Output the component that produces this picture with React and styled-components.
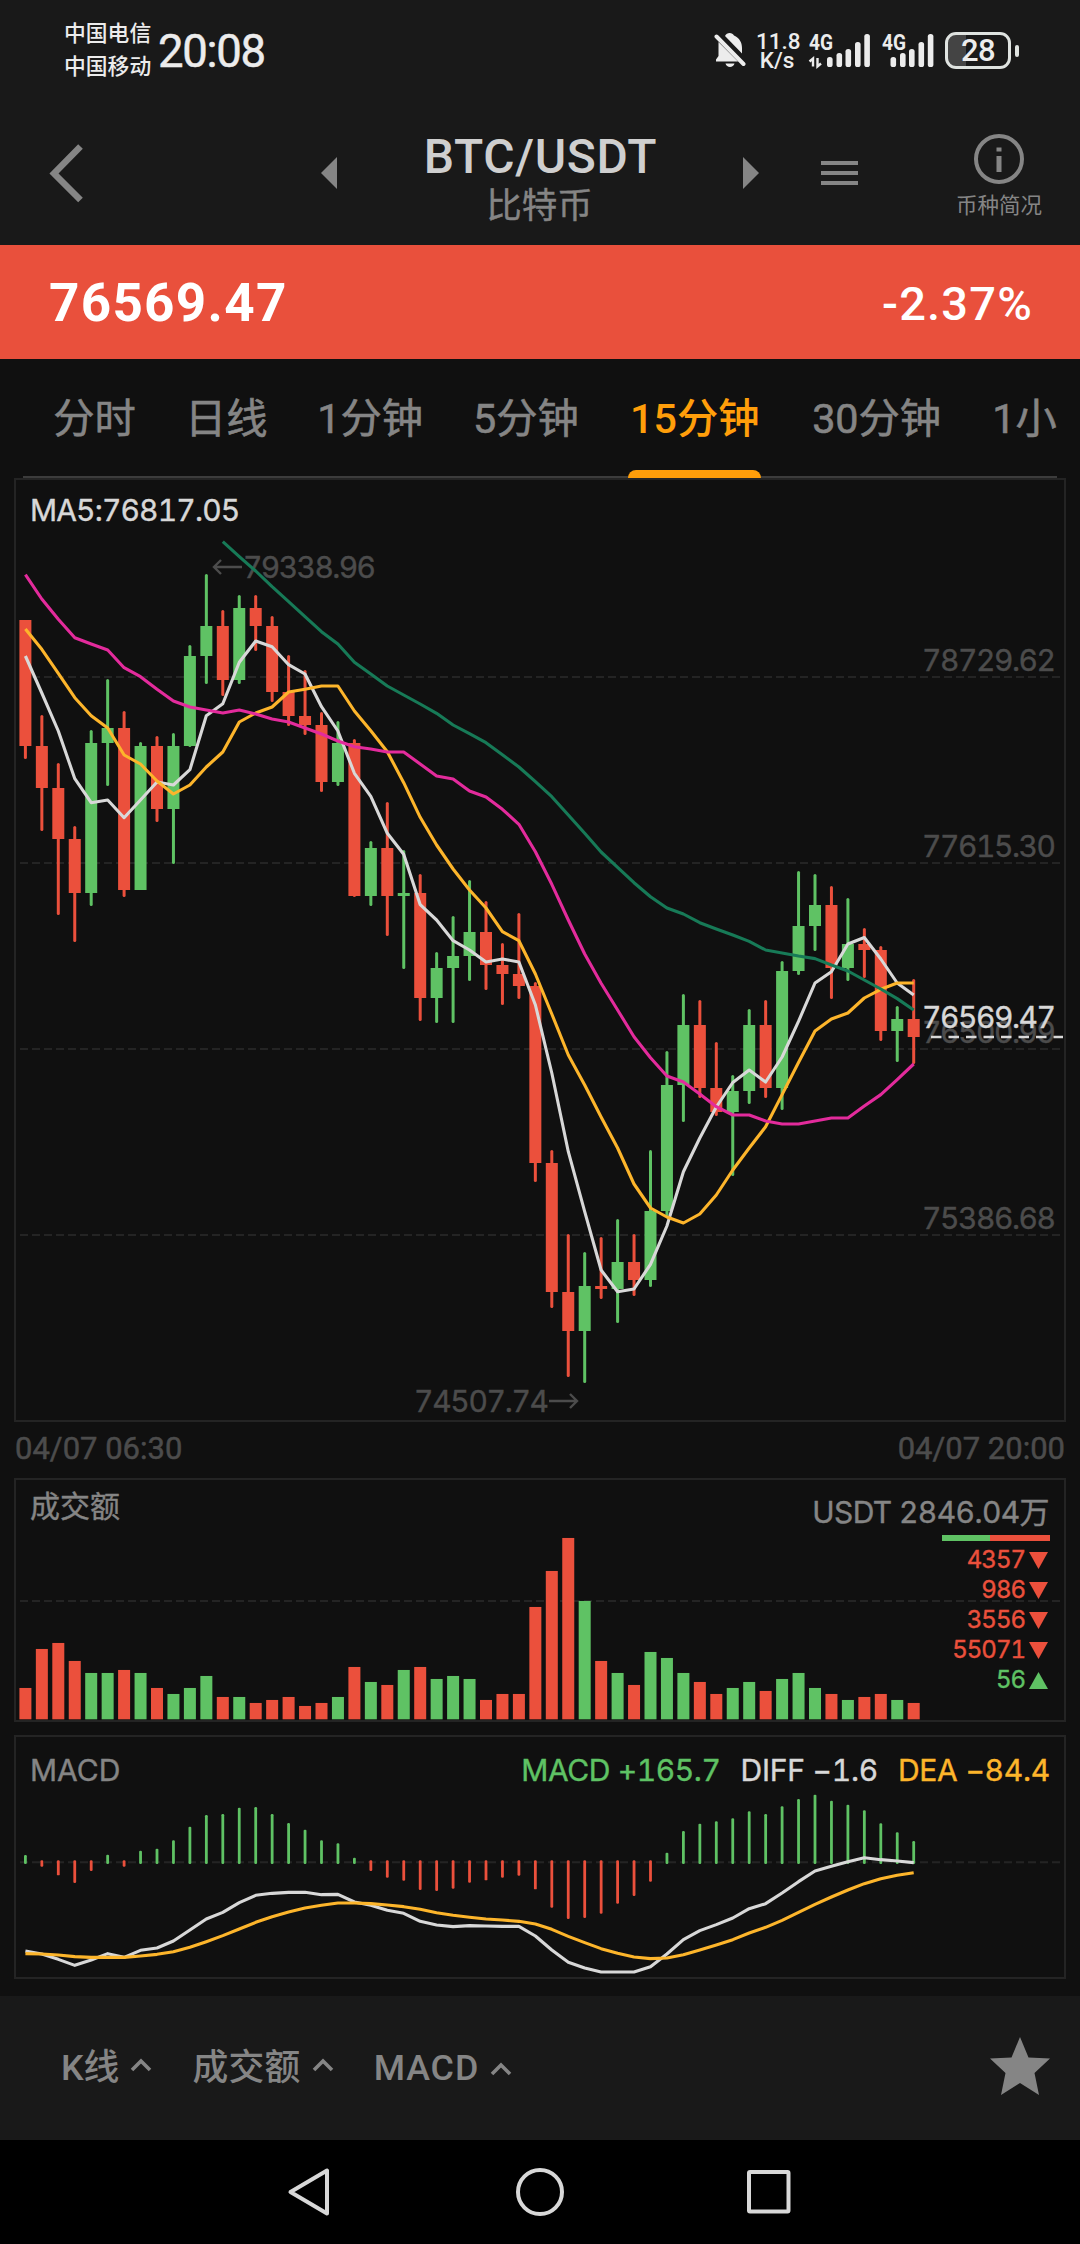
import React from "react";
import styled, { createGlobalStyle } from "styled-components";

const GREEN = "#5fc264";
const RED = "#eb503c";
const GREY = "#858585";
const DIM = "#4c4c4c";
const LIGHT = "#d8d8d8";
const AMBER = "#fdb52b";
const PINK = "#e32b9c";
const TEAL = "#177a57";
const LINE = "#242424";
const FONT = `Roboto, "Noto Sans CJK SC", sans-serif`;
const CHART_FONT = `Inter, "Noto Sans CJK SC", sans-serif`;

const Global = createGlobalStyle`
  * { box-sizing: border-box; }
  body { margin: 0; background: #101010; font-family: ${FONT}; }
`;

const Screen = styled.div`
  width: 1080px;
  height: 2244px;
  display: flex;
  flex-direction: column;
  background: #101010;
  overflow: hidden;
`;

/* ---------- status bar ---------- */
const StatusBar = styled.div`
  height: 100px;
  padding: 18px 61px 0 64px;
  display: flex;
  justify-content: space-between;
  background: #191919;
  color: #ececec;
`;
const StatusLeft = styled.div`
  display: flex;
  gap: 6px;
`;
const Carriers = styled.div`
  width: 88px;
  font-size: 21.8px;
  line-height: 32.5px;
  font-weight: 500;
  white-space: nowrap;
`;
const Clock = styled.div`
  font-size: 45.5px;
  line-height: 68px;
  letter-spacing: -1.3px;
  -webkit-text-stroke: 0.5px #ececec;
`;
const StatusRight = styled.div`
  display: flex;
  align-items: flex-start;
`;
const BellIcon = styled.svg`
  width: 32px;
  height: 36px;
  margin: 14px 10px 0 0;
`;
const NetSpeed = styled.div`
  width: 42px;
  margin: 14px 10px 0 0;
  font-size: 22.5px;
  line-height: 19px;
  text-align: center;
  white-space: nowrap;
  font-weight: 500;
`;
const SignalIcon = styled.svg`
  width: 64px;
  height: 36px;
  margin: 14px ${(p) => p.$gap}px 0 0;
  overflow: visible;
`;
const NetType = styled.text`
  font-family: ${FONT};
  font-size: 22.5px;
  font-weight: 700;
  fill: #ececec;
`;
const Battery = styled.div`
  width: 66px;
  height: 37px;
  margin-top: 14px;
  border: 3px solid #dfe3e0;
  border-radius: 11px;
  font-size: 31px;
  line-height: 32px;
  text-align: center;
  letter-spacing: -0.5px;
  font-weight: 500;
  background: linear-gradient(90deg, #444 0 18px, transparent 18px);
`;
const BatteryTip = styled.div`
  width: 4px;
  height: 12px;
  margin: 27px 0 0 4px;
  border-radius: 2px;
  background: #dfe3e0;
`;

/* ---------- title bar ---------- */
const TitleBar = styled.header`
  height: 145px;
  padding: 0 38px 0 49px;
  display: flex;
  align-items: flex-start;
  background: #191919;
`;
const BarIcon = styled.svg`
  width: ${(p) => p.$w}px;
  height: ${(p) => p.$h}px;
  margin: ${(p) => p.$top}px ${(p) => p.$right || 0}px 0 0;
  flex: none;
`;
const Title = styled.div`
  width: 405px;
  padding-top: 29px;
  text-align: center;
  white-space: nowrap;
`;
const Pair = styled.div`
  font-size: 48px;
  line-height: 55px;
  font-weight: 500;
  letter-spacing: 0.65px;
  color: #cfcfcf;
`;
const PairName = styled.div`
  margin-top: 1px;
  padding-right: 2px;
  font-size: 35.5px;
  line-height: 42px;
  color: ${GREY};
  -webkit-text-stroke: 0.4px;
`;
const InfoButton = styled.div`
  flex: 1;
  display: flex;
  flex-direction: column;
  align-items: flex-end;
`;
const InfoLabel = styled.div`
  margin-top: 6px;
  width: 86px;
  font-size: 21.5px;
  line-height: 31px;
  color: ${GREY};
  white-space: nowrap;
`;

/* ---------- price ---------- */
const PriceBar = styled.div`
  height: 114px;
  padding: 2px 47px 0 49px;
  display: flex;
  align-items: center;
  justify-content: space-between;
  background: #e9503c;
  color: #fff;
`;
const Price = styled.div`
  font-size: 53px;
  font-weight: 700;
  letter-spacing: 1.3px;
  line-height: 116px;
`;
const Change = styled.div`
  font-size: 47px;
  font-weight: 500;
  letter-spacing: 1.2px;
  line-height: 119px;
`;

/* ---------- tabs ---------- */
const Tabs = styled.nav`
  height: 119px;
  margin: 0 23px;
  padding: 0 0 0 30px;
  display: flex;
  justify-content: space-between;
  border-bottom: 2px solid #3c3c3c;
`;
const Tab = styled.div`
  width: ${(p) => p.$w}px;
  height: 119px;
  padding-bottom: 8px;
  display: flex;
  align-items: center;
  justify-content: center;
  font-size: 41.3px;
  font-weight: ${(p) => (p.$active ? 500 : 400)};
  -webkit-text-stroke: ${(p) => (p.$active ? 0 : 0.6)}px;
  white-space: nowrap;
  color: ${(p) => (p.$active ? "#ff9e0a" : "#858585")};
  position: relative;
  &::after {
    content: "";
    display: ${(p) => (p.$active ? "block" : "none")};
    position: absolute;
    left: 0;
    right: 0;
    bottom: 0;
    height: 8px;
    border-radius: 8px 8px 0 0;
    background: #ff9e0a;
  }
`;

/* ---------- chart panels ---------- */
const Panel = styled.section`
  display: grid;
  height: ${(p) => p.$h}px;
  margin: ${(p) => p.$gap || 0}px 14px 0;
  flex: none;
  border: 2px solid ${LINE};
`;
const Layer = styled.svg`
  grid-area: 1 / 1;
  width: 1048px;
  height: ${(p) => p.$h}px;
  display: block;
`;
const PanelHead = styled.div`
  grid-area: 1 / 1;
  align-self: start;
  display: flex;
  align-items: flex-start;
  justify-content: space-between;
  padding: ${(p) => p.$top}px 14px 0 14px;
  font-family: ${CHART_FONT};
  font-variant-numeric: tabular-nums;
  font-size: 30px;
  line-height: 36px;
  letter-spacing: ${(p) => p.$spacing || 0}px;
  color: ${(p) => p.$color || GREY};
  -webkit-text-stroke: 0.4px;
  white-space: nowrap;
`;
const ChartText = styled.text`
  font-family: ${CHART_FONT};
  font-variant-numeric: tabular-nums;
  font-size: 30px;
  fill: ${(p) => p.$color || DIM};
  stroke: ${(p) => p.$color || DIM};
  stroke-width: 0.4px;
`;
const TimeAxis = styled.div`
  height: 56px;
  padding: 0 15px;
  display: flex;
  justify-content: space-between;
  font-size: 31px;
  line-height: 53px;
  color: ${DIM};
  -webkit-text-stroke: 0.5px;
`;
const TurnoverSide = styled.div`
  display: flex;
  flex-direction: column;
  align-items: flex-end;
`;
const Turnover = styled.div`
  padding: 6px 1px 0 0;
  letter-spacing: -0.6px;
`;
const Ratio = styled.div`
  width: 108px;
  height: 6px;
  margin: 5px 0 0;
  background: linear-gradient(90deg, ${GREEN} 0 48px, ${RED} 48px);
`;
const Flow = styled.div`
  height: 30px;
  display: flex;
  align-items: center;
  gap: 4px;
  padding: 8px 2px 0 0;
  font-size: 24px;
  letter-spacing: -1px;
  color: ${(p) => (p.$up ? GREEN : RED)};
`;
const Legend = styled.div`
  display: flex;
  gap: 20px;
`;
const LegendItem = styled.span`
  color: ${(p) => p.$color};
  letter-spacing: ${(p) => p.$spacing}px;
`;

/* ---------- bottom ---------- */
const Toolbar = styled.footer`
  height: 144px;
  margin-top: 17px;
  padding: 0 30px 0 61px;
  display: flex;
  align-items: center;
  background: #191919;
  color: ${GREY};
`;
const Picker = styled.div`
  display: flex;
  align-items: center;
  gap: ${(p) => p.$gap}px;
  margin: ${(p) => p.$top || 0}px ${(p) => p.$right}px 8px 0;
  font-size: 35.8px;
  font-weight: 500;
  letter-spacing: ${(p) => p.$spacing || 0}px;
  white-space: nowrap;
`;
const Caret = styled.svg`
  width: 22px;
  height: 16px;
`;
const StarIcon = styled.svg`
  width: 60px;
  height: 58px;
  margin: 0 0 4px auto;
`;
const NavBar = styled.div`
  height: 104px;
  display: flex;
  align-items: center;
  background: #000;
  padding: 0 286px 0 286px;
  justify-content: space-between;
`;
const NavIcon = styled.svg`
  width: 50px;
  height: 50px;
`;

/* Candles: direction, high, body top, body bottom, low */
const candles = [
  ["d", 620, 620, 746, 759], ["d", 715, 746, 788, 831], ["d", 763, 788, 839, 915], ["d", 826, 839, 893, 942],
  ["u", 730, 743, 893, 906], ["u", 679, 728, 743, 786], ["d", 711, 728, 890, 897], ["u", 742, 746, 890, 890],
  ["d", 736, 746, 809, 822], ["u", 733, 746, 809, 864], ["u", 645, 656, 746, 747], ["u", 574, 626, 656, 684],
  ["d", 610, 626, 680, 696], ["u", 595, 608, 680, 684], ["d", 595, 608, 626, 651], ["d", 616, 626, 692, 702],
  ["d", 655, 692, 716, 726], ["d", 670, 716, 725, 735], ["d", 712, 725, 782, 792], ["u", 721, 743, 782, 786],
  ["d", 739, 743, 896, 897], ["u", 841, 848, 896, 906], ["d", 802, 848, 896, 936], ["u", 850, 893, 896, 969],
  ["d", 874, 893, 998, 1021], ["u", 952, 968, 998, 1023], ["u", 916, 956, 968, 1023], ["u", 880, 932, 956, 981],
  ["d", 901, 932, 965, 990], ["d", 943, 965, 974, 1005], ["d", 913, 974, 986, 999], ["d", 982, 986, 1163, 1182],
  ["d", 1150, 1163, 1292, 1308], ["d", 1234, 1292, 1331, 1377], ["u", 1252, 1286, 1331, 1383], ["d", 1237, 1286, 1289, 1299],
  ["u", 1219, 1262, 1289, 1323], ["d", 1234, 1262, 1280, 1296], ["u", 1150, 1211, 1280, 1287], ["u", 1051, 1085, 1211, 1216],
  ["u", 994, 1025, 1085, 1122], ["d", 1000, 1025, 1088, 1098], ["d", 1042, 1088, 1112, 1116], ["u", 1075, 1091, 1112, 1176],
  ["u", 1009, 1025, 1091, 1104], ["d", 1000, 1025, 1088, 1098], ["u", 961, 971, 1088, 1110], ["u", 871, 926, 971, 975],
  ["u", 874, 905, 926, 951], ["d", 886, 905, 968, 999], ["u", 898, 944, 968, 981], ["d", 928, 944, 950, 978],
  ["d", 946, 950, 1031, 1041], ["u", 1006, 1019, 1031, 1062], ["d", 979, 1019, 1037, 1064],
];

const ma5 = [656, 693, 731, 778.7, 802.7, 800, 817.7, 800, 782, 785, 769.7, 715.7, 703.7, 662.3, 641, 646.7, 664.7, 674, 706.7, 731, 773.3, 796.3, 833.3, 854.3, 904.7, 920, 940.7, 950, 962, 959, 962, 1005, 1073, 1151.7, 1211.7, 1270, 1291.7, 1289, 1264.3, 1226, 1171.7, 1138, 1107, 1082.5, 1070, 1082, 1057, 1021.4, 983, 971.8, 944, 937.5, 959, 983, 995];
const ma10 = [629, 649.3, 673.3, 697.7, 715.7, 728, 755, 764, 781, 794, 785, 767, 752, 722, 713, 707, 692, 689.3, 686, 686, 711, 730.7, 751.7, 782.7, 817.3, 845, 869, 890, 908, 931.7, 940.7, 974, 1014, 1055, 1085, 1117, 1148, 1184, 1208, 1217, 1223, 1214, 1195, 1170, 1148, 1126.8, 1094.6, 1062.5, 1031, 1019, 1013, 998, 989.3, 983, 983];
const ma30 = [574.7, 599, 619.3, 637.7, 644, 650, 667.7, 676.7, 689.3, 701, 707, 710, 713, 710, 714, 719, 722, 728, 734, 741, 746.7, 749, 752, 752, 764, 776, 779, 791, 797, 809.3, 824.3, 851.7, 884.3, 920, 954, 983.3, 1010, 1036.7, 1057.7, 1076, 1082, 1094, 1106.7, 1115, 1115, 1121, 1124, 1124, 1121, 1118, 1118, 1106, 1094.6, 1079.6, 1064];
const ma60 = [541.7, 556.7, 571, 586.7, 601.7, 616.7, 631.7, 644, 662.3, 674, 686, 695, 704, 713.3, 725, 733.7, 742.7, 754.7, 767, 781.7, 796.7, 815, 833.3, 852, 867.3, 882.7, 896.7, 908, 914, 922.7, 929, 935, 941.4, 950, 953, 956, 958.6, 965, 971, 980, 989, 998.6, 1010];

/* Heights in thirds of a pixel */
const volumes = [94, 211, 229, 175, 139, 139, 148, 139, 94, 76, 94, 130, 67, 67, 49, 58, 67, 40, 49, 67, 157, 112, 103, 148, 157, 121, 130, 121, 58, 76, 76, 337, 445, 544, 355, 175, 139, 103, 202, 184, 139, 112, 76, 94, 112, 85, 121, 139, 94, 76, 58, 67, 76, 58, 49];
const macd = [375, 410, 436, 459, 423, 374, 410, 362, 356, 331, 290, 255, 252, 233, 231, 252, 279, 299, 331, 340, 383, 423, 443, 452, 480, 483, 476, 458, 451, 443, 437, 478, 533, 567, 564, 551, 521, 498, 455, 368, 303, 281, 274, 265, 244, 252, 229, 207, 194, 212, 224, 241, 280, 307, 333];
const diff = [663, 672, 688, 706, 690, 671, 682, 661, 654, 633, 600, 567, 547, 518, 496, 490, 487, 487, 494, 493, 516, 526, 541, 550, 574, 585, 590, 587, 588, 589, 589, 618, 660, 697, 714, 726, 726, 726, 710, 672, 629, 602, 584, 564, 536, 521, 489, 455, 423, 409, 395, 383, 389, 393, 398];
const dea = [671, 672, 675, 680, 682, 682, 682, 678, 673, 665, 652, 635, 617, 597, 577, 560, 546, 534, 526, 519, 519, 521, 525, 530, 538, 548, 556, 562, 567, 570, 574, 582, 598, 619, 638, 656, 670, 681, 686, 684, 674, 660, 645, 629, 609, 592, 571, 547, 523, 501, 480, 461, 446, 436, 428];

const xAt = (i) => 25.4 + i * 16.45;
const colorOf = (i) => (candles[i][0] === "u" ? GREEN : RED);
const points = (values, start = 0) =>
  values.map((y, i) => `${xAt(i + start).toFixed(1)},${y}`).join(" ");

const Curve = ({ values, start, color }) => (
  <polyline points={points(values, start)} fill="none" stroke={color} strokeWidth="3.1" strokeLinejoin="round" />
);
const Grid = ({ y }) => (
  <line x1="20" x2="1060" y1={y} y2={y} stroke={LINE} strokeWidth="2" strokeDasharray="8 4" />
);

const Signal = ({ gap, shift, arrows }) => (
  <SignalIcon $gap={gap} viewBox={`${shift} 0 64 36`}>
    <NetType x={arrows ? 1 : 10.5} y="17.5" textLength="24" lengthAdjust="spacingAndGlyphs">4G</NetType>
    {[25, 21, 17, 10, 2].map((top, i) => (
      <rect key={top} x={[19, 28.5, 37.5, 47, 56.3][i]} y={top} width="5.6" height={35 - top} rx="2.6" fill="#ececec" />
    ))}
    {arrows && <path d="M1.5 29.5l3.5-3v8M9.5 26v8.5l3.5-3" fill="none" stroke="#ececec" strokeWidth="2.4" />}
  </SignalIcon>
);

const CandleChart = () => (
  <Layer $h={940} viewBox="16 480 1048 940">
    {[677, 863, 1049, 1235].map((y) => <Grid key={y} y={y} />)}
    {candles.map(([, high, top, bottom, low], i) => (
      <g key={i} fill={colorOf(i)}>
        <rect x={xAt(i) - 1.5} y={high} width="3" height={low - high} rx="1.5" />
        <rect x={xAt(i) - 6} y={top} width="12" height={bottom - top} />
      </g>
    ))}
    {[["78729.62", 671], ["77615.30", 857], ["76500.99", 1043], ["75386.68", 1229]].map(([label, y]) => (
      <ChartText key={label} x={1056} y={y} textAnchor="end" textLength="134">{label}</ChartText>
    ))}
    <ChartText x="243" y="578" textLength="133">79338.96</ChartText>
    <ChartText x="414" y="1412" textLength="135">74507.74</ChartText>
    <g fill="none" stroke={DIM} strokeWidth="2.4">
      <path d="M242 567H214M221 560l-7 7 7 7" />
      <path d="M549 1401h28M570 1394l7 7-7 7" />
    </g>
    <Curve values={ma5} color={LIGHT} />
    <Curve values={ma10} color={AMBER} />
    <Curve values={ma30} color={PINK} />
    <Curve values={ma60} start={12} color={TEAL} />
    <line x1="931" x2="1063" y1="1037" y2="1037" stroke={LIGHT} strokeWidth="2.5" strokeDasharray="10.5 7" />
    <ChartText $color={LIGHT} x="1056" y="1028" textAnchor="end" textLength="134">76569.47</ChartText>
  </Layer>
);

const VolumeChart = () => (
  <Layer $h={241} viewBox="16 1480 1048 241">
    <Grid y={1601} />
    {volumes.map((v, i) => (
      <rect key={i} x={xAt(i) - 6} y={1719.3 - v / 3} width="12" height={v / 3} fill={colorOf(i)} />
    ))}
  </Layer>
);

const macdY = (v) => 1730 + v / 3;
const MacdChart = () => (
  <Layer $h={240} viewBox="16 1737 1048 240">
    <Grid y={1862.3} />
    {macd.map((v, i) => {
      const up = v < 397;
      return (
        <rect
          key={i}
          x={xAt(i) - 1.4}
          y={up ? macdY(v) : 1860.3}
          width="2.8"
          height={up ? 1864 - macdY(v) : macdY(v) - 1860.3}
          rx="1.2"
          fill={up ? GREEN : RED}
        />
      );
    })}
    <Curve values={diff.map(macdY)} color={LIGHT} />
    <Curve values={dea.map(macdY)} color={AMBER} />
  </Layer>
);

const tabs = [["分时", 83], ["日线", 83], ["1分钟", 107], ["5分钟", 107], ["15分钟", 133], ["30分钟", 133], ["1小", 65]];
const flows = [["4357"], ["986"], ["3556"], ["55071"], ["56", true]];

const UpCaret = () => (
  <Caret viewBox="0 0 22 16">
    <path d="M2 14l9-9 9 9" fill="none" stroke={GREY} strokeWidth="3.6" />
  </Caret>
);

export default function App() {
  return (
    <Screen>
      <Global />
      <StatusBar>
        <StatusLeft>
          <Carriers>
            <div>中国电信</div>
            <div>中国移动</div>
          </Carriers>
          <Clock>20:08</Clock>
        </StatusLeft>
        <StatusRight>
          <BellIcon viewBox="0 0 32 36">
            <path d="M11 4C12.5 0 18.5 0 20 3.5C25.5 6 28 10.5 28 16V21.5Z" fill="#ececec" />
            <path d="M4.5 10L24 29.5H2V27.5L4.5 24ZM11.5 31.5H20.5C19.5 36 12.5 36 11.5 31.5Z" fill="#ececec" />
            <path d="M2.5 4.5L29.5 32" stroke="#ececec" strokeWidth="4" strokeLinecap="round" />
          </BellIcon>
          <NetSpeed>
            <div>11.8</div>
            <div>K/s</div>
          </NetSpeed>
          <Signal gap={1} shift={0} arrows />
          <Signal gap={8} shift={1.5} />
          <Battery>28</Battery>
          <BatteryTip />
        </StatusRight>
      </StatusBar>
      <TitleBar>
        <BarIcon $w={36} $h={60} $top={43} $right={236} viewBox="0 0 36 60">
          <path d="M31.5 3.5L5 30.5L31.5 57" fill="none" stroke={GREY} strokeWidth="6.5" />
        </BarIcon>
        <BarIcon $w={17} $h={33} $top={57} viewBox="0 0 17 33">
          <path d="M16 0V32L0 16Z" fill={GREY} />
        </BarIcon>
        <Title>
          <Pair>BTC/USDT</Pair>
          <PairName>比特币</PairName>
        </Title>
        <BarIcon $w={17} $h={33} $top={57} $right={61} viewBox="0 0 17 33">
          <path d="M0 0V32L16 16Z" fill={GREY} />
        </BarIcon>
        <BarIcon $w={37} $h={26} $top={60} viewBox="0 0 37 26">
          <path d="M0 3H37M0 13H37M0 23H37" stroke={GREY} strokeWidth="4" />
        </BarIcon>
        <InfoButton>
          <BarIcon $w={50} $h={50} $top={34} $right={18} viewBox="0 0 50 50">
            <circle cx="25" cy="25" r="23" fill="none" stroke={GREY} strokeWidth="4" />
            <path d="M25 13.5V17.5M25 22V38" stroke={GREY} strokeWidth="5" />
          </BarIcon>
          <InfoLabel>币种简况</InfoLabel>
        </InfoButton>
      </TitleBar>
      <PriceBar>
        <Price>76569.47</Price>
        <Change>-2.37%</Change>
      </PriceBar>
      <Tabs>
        {tabs.map(([label, w]) => (
          <Tab key={label} $w={w} $active={label === "15分钟"}>{label}</Tab>
        ))}
      </Tabs>
      <Panel $h={944}>
        <CandleChart />
        <PanelHead $top={12} $color={LIGHT} $spacing={-0.85}>MA5:76817.05</PanelHead>
      </Panel>
      <TimeAxis>
        <span>04/07 06:30</span>
        <span>04/07 20:00</span>
      </TimeAxis>
      <Panel $h={244}>
        <VolumeChart />
        <PanelHead $top={8}>
          <span>成交额</span>
          <TurnoverSide>
            <Turnover>USDT 2846.04万</Turnover>
            <Ratio />
            {flows.map(([value, up]) => (
              <Flow key={value} $up={up}>
                {value}
                <svg width="19" height="17" viewBox="0 0 19 17">
                  <path d={up ? "M0 17H19L9.5 0Z" : "M0 0H19L9.5 17Z"} fill={up ? GREEN : RED} />
                </svg>
              </Flow>
            ))}
          </TurnoverSide>
        </PanelHead>
      </Panel>
      <Panel $h={244} $gap={13}>
        <MacdChart />
        <PanelHead $top={15}>
          <span>MACD</span>
          <Legend>
            <LegendItem $color={GREEN} $spacing={-0.4}>MACD +165.7</LegendItem>
            <LegendItem $color={LIGHT} $spacing={-0.25}>DIFF −1.6</LegendItem>
            <LegendItem $color={AMBER} $spacing={-0.25}>DEA −84.4</LegendItem>
          </Legend>
        </PanelHead>
      </Panel>
      <Toolbar>
        <Picker $gap={11} $right={40}>K线<UpCaret /></Picker>
        <Picker $gap={11} $right={40} $spacing={0.3}>成交额<UpCaret /></Picker>
        <Picker $gap={11} $right={0} $top={7} $spacing={0.9}>MACD<UpCaret /></Picker>
        <StarIcon viewBox="0 0 60 58">
          <path d="M30 0L38.5 20.5L60 21.5L44.5 36L49 58L30 46L11 58L15.5 36L0 21.5L21.5 20.5Z" fill={GREY} />
        </StarIcon>
      </Toolbar>
      <NavBar>
        <NavIcon viewBox="0 0 50 50">
          <path d="M41 3.5V46.5L4.5 25Z" fill="none" stroke="#d8d8d8" strokeWidth="4" strokeLinejoin="round" />
        </NavIcon>
        <NavIcon viewBox="0 0 50 50">
          <circle cx="25" cy="25" r="22" fill="none" stroke="#d8d8d8" strokeWidth="4" />
        </NavIcon>
        <NavIcon viewBox="0 0 50 50">
          <rect x="5" y="5" width="39.5" height="39.5" rx="1" fill="none" stroke="#d8d8d8" strokeWidth="4" />
        </NavIcon>
      </NavBar>
    </Screen>
  );
}
